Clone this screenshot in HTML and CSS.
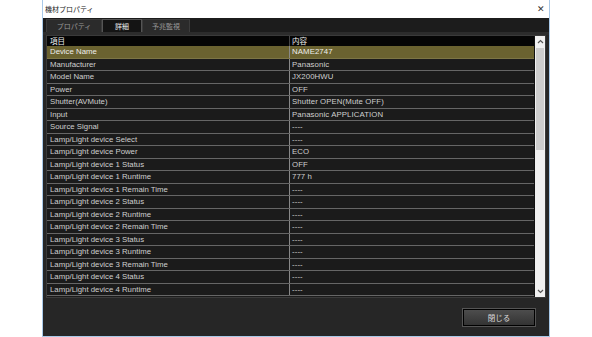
FILE: index.html
```html
<!DOCTYPE html>
<html lang="ja">
<head>
  <meta charset="UTF-8" />
  <title>機材プロパティ</title>
  <link rel="stylesheet" href="styles.css">
</head>
<body>

  <div class="window">
    <!-- title bar -->
    <div class="titlebar">
      <span class="title">機材プロパティ</span>
      <span class="close">&#x2715;</span>
    </div>

    <!-- tabs -->
    <div class="tabs">
      <div class="tab">プロパティ</div>
      <div class="tab active">詳細</div>
      <div class="tab">予兆監視</div>
    </div>

    <!-- detail list -->
    <div class="panel">
      <div class="list">
        <div class="rows">
          <div class="row head"><div class="c1">項目</div><div class="c2">内容</div></div>
          <div class="row sel"><div class="c1">Device Name</div><div class="c2">NAME2747</div></div>
          <div class="row"><div class="c1">Manufacturer</div><div class="c2">Panasonic</div></div>
          <div class="row"><div class="c1">Model Name</div><div class="c2">JX200HWU</div></div>
          <div class="row"><div class="c1">Power</div><div class="c2">OFF</div></div>
          <div class="row"><div class="c1">Shutter(AVMute)</div><div class="c2">Shutter OPEN(Mute OFF)</div></div>
          <div class="row"><div class="c1">Input</div><div class="c2">Panasonic APPLICATION</div></div>
          <div class="row"><div class="c1">Source Signal</div><div class="c2">----</div></div>
          <div class="row"><div class="c1">Lamp/Light device Select</div><div class="c2">----</div></div>
          <div class="row"><div class="c1">Lamp/Light device Power</div><div class="c2">ECO</div></div>
          <div class="row"><div class="c1">Lamp/Light device 1 Status</div><div class="c2">OFF</div></div>
          <div class="row"><div class="c1">Lamp/Light device 1 Runtime</div><div class="c2">777 h</div></div>
          <div class="row"><div class="c1">Lamp/Light device 1 Remain Time</div><div class="c2">----</div></div>
          <div class="row"><div class="c1">Lamp/Light device 2 Status</div><div class="c2">----</div></div>
          <div class="row"><div class="c1">Lamp/Light device 2 Runtime</div><div class="c2">----</div></div>
          <div class="row"><div class="c1">Lamp/Light device 2 Remain Time</div><div class="c2">----</div></div>
          <div class="row"><div class="c1">Lamp/Light device 3 Status</div><div class="c2">----</div></div>
          <div class="row"><div class="c1">Lamp/Light device 3 Runtime</div><div class="c2">----</div></div>
          <div class="row"><div class="c1">Lamp/Light device 3 Remain Time</div><div class="c2">----</div></div>
          <div class="row"><div class="c1">Lamp/Light device 4 Status</div><div class="c2">----</div></div>
          <div class="row"><div class="c1">Lamp/Light device 4 Runtime</div><div class="c2">----</div></div>
        </div>
        <div class="scrollbar">
          <div class="arrow">
            <svg width="7" height="5" viewBox="0 0 7 5"><path d="M1 4 L3.5 1.5 L6 4" fill="none" stroke="#555" stroke-width="1.2"/></svg>
          </div>
          <div class="track"><div class="thumb"></div></div>
          <div class="arrow">
            <svg width="7" height="5" viewBox="0 0 7 5"><path d="M1 1 L3.5 3.5 L6 1" fill="none" stroke="#555" stroke-width="1.2"/></svg>
          </div>
        </div>
      </div>

      <div class="footer">
        <button class="btn">閉じる</button>
      </div>
    </div>
  </div>

</body>
</html>
```

FILE: styles.css
```css
body { margin: 0; background: #fff; font-family: "Liberation Sans", "Noto Sans CJK JP", sans-serif; }

/* window frame */
.window {
  width: 506px; height: 336px; margin-left: 42px;
  border: 1px solid #a9c9e8; border-top: none;
  display: flex; flex-direction: column;
  background: #262626;
}

/* title bar */
.titlebar {
  height: 18px; background: #fff;
  display: flex; align-items: center; justify-content: space-between;
  padding: 0 4px 0 2px;
}
.title { font-family: "Noto Sans CJK JP", sans-serif; font-size: 7px; color: #222; }
.close { font-size: 9px; color: #333; line-height: 1; }

/* tabs */
.tabs {
  height: 14px; background: #1c1c1c;
  display: flex; align-items: flex-end; padding-left: 3px;
  border-bottom: 3px solid #2c2c2c;
}
.tab {
  height: 12px; padding: 0 9px;
  background: #2b2b2b; border: 1px solid #3c3c3c; border-bottom: none;
  font-family: "Noto Sans CJK JP", sans-serif; font-size: 7px; color: #999;
  display: flex; align-items: center; justify-content: center;
}
.tab:first-child { width: 36px; }
.tab.active { background: #141414; color: #eee; border-color: #555; width: 20px; }
.tab:last-child { width: 28px; }

/* panel */
.panel { flex: 1; display: flex; flex-direction: column; padding: 0 3px 0 3px; }

.list {
  display: flex; height: 261px;
  border: 1px solid #3a3a3a; background: #1b1b1b;
}
.rows { flex: 1; }
.row {
  display: flex; height: 12.5px; box-sizing: border-box;
  border-bottom: 1px solid #666;
  font-size: 7.8px; color: #cfcfcf; line-height: 11.5px;
}
.row .c1 { width: 243px; padding-left: 3px; border-right: 1px solid #888; box-sizing: border-box; white-space: nowrap; }
.row .c2 { flex: 1; padding-left: 2px; white-space: nowrap; letter-spacing: .1px; }
.row.head { height: 10px; background: #050505; border-bottom: none; line-height: 10px; color: #eee; }
.row.head .c1, .row.head .c2 { font-family: "Noto Sans CJK JP", sans-serif; font-size: 7.5px; border-right-color: #444; }
.row.sel { background: #6a6230; color: #eee; border-bottom-color: #7c7545; }

/* scrollbar */
.scrollbar { width: 10px; display: flex; flex-direction: column; background: #f0f0f0; border-left: 1px solid #111; }
.arrow { height: 11px; display: flex; align-items: center; justify-content: center; background: #f0f0f0; }
.track { flex: 1; }
.thumb { height: 102px; margin: 1px 1px 0 1px; background: #cdcdcd; }

/* footer */
.footer { flex: 1; display: flex; justify-content: flex-end; align-items: flex-start; padding: 11px 11px 0 0; }
.btn {
  width: 72px; height: 17px; padding: 0;
  background: linear-gradient(#4d4d4d, #333);
  border: 1px solid #000; outline: 1px solid #555;
  font-family: "Noto Sans CJK JP", sans-serif; font-size: 7.5px; color: #ddd;
}
```
